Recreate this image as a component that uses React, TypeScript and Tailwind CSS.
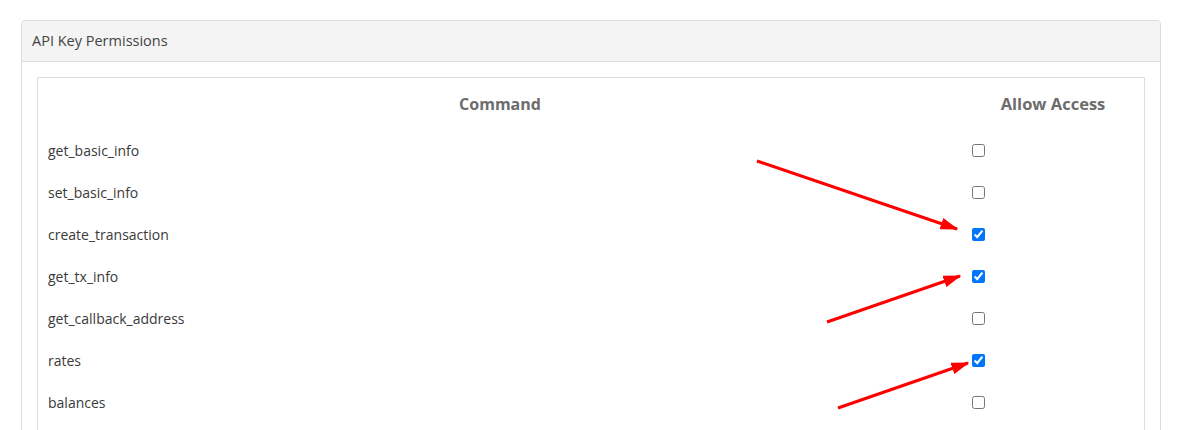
import React from "react";

const commands = [
  { name: "get_basic_info", allowed: false },
  { name: "set_basic_info", allowed: false },
  { name: "create_transaction", allowed: true },
  { name: "get_tx_info", allowed: true },
  { name: "get_callback_address", allowed: false },
  { name: "rates", allowed: true },
  { name: "balances", allowed: false },
];

const arrows = [
  { x1: 757, y1: 161, x2: 957, y2: 229 },
  { x1: 827, y1: 322, x2: 960, y2: 276 },
  { x1: 838, y1: 408, x2: 968, y2: 363 },
];

function Arrows() {
  return (
    <svg className="absolute left-0 top-0 pointer-events-none" width="1187" height="430">
      <defs>
        <marker id="head" markerWidth="6" markerHeight="4" refX="5.5" refY="2" orient="auto" markerUnits="strokeWidth">
          <path d="M0,0 L6,2 L0,4 z" fill="#ff0000" />
        </marker>
      </defs>
      {arrows.map((a, i) => (
        <line key={i} x1={a.x1} y1={a.y1} x2={a.x2} y2={a.y2} stroke="#ff0000" strokeWidth="3" markerEnd="url(#head)" />
      ))}
    </svg>
  );
}

export default function App() {
  return (
    <div className="relative w-[1187px] h-[430px] overflow-hidden bg-white pt-5 font-['Open_Sans',sans-serif]">
      <div className="ml-[21px] w-[1140px] border border-[#dcdcdc] rounded-t-[4px]">
        <div className="h-[41px] bg-[#f4f4f4] border-b border-[#dcdcdc] px-[10px] flex items-center text-[14.5px] text-[#444] rounded-t-[4px]">
          API Key Permissions
        </div>
        <div className="px-[15px] pt-[15px] pb-4">
          <div className="border border-[#dedede] pb-10">
            <table className="w-full border-collapse">
              <thead>
                <tr className="h-[51px]">
                  <th className="pt-px text-[16px] font-bold text-[#6c6c6c] text-center">Command</th>
                  <th className="pt-px w-[182px] text-[16.5px] font-bold text-[#6c6c6c] text-center">Allow Access</th>
                </tr>
              </thead>
              <tbody>
                {commands.map((c) => (
                  <tr key={c.name} className="h-[42px]">
                    <td className="px-[10px] pt-px text-[14px] text-[#3a3a3a]">{c.name}</td>
                    <td className="px-[10px] align-middle">
                      <input type="checkbox" defaultChecked={c.allowed} className="block w-[13px] h-[13px] m-0" />
                    </td>
                  </tr>
                ))}
              </tbody>
            </table>
          </div>
        </div>
      </div>
      <Arrows />
    </div>
  );
}
